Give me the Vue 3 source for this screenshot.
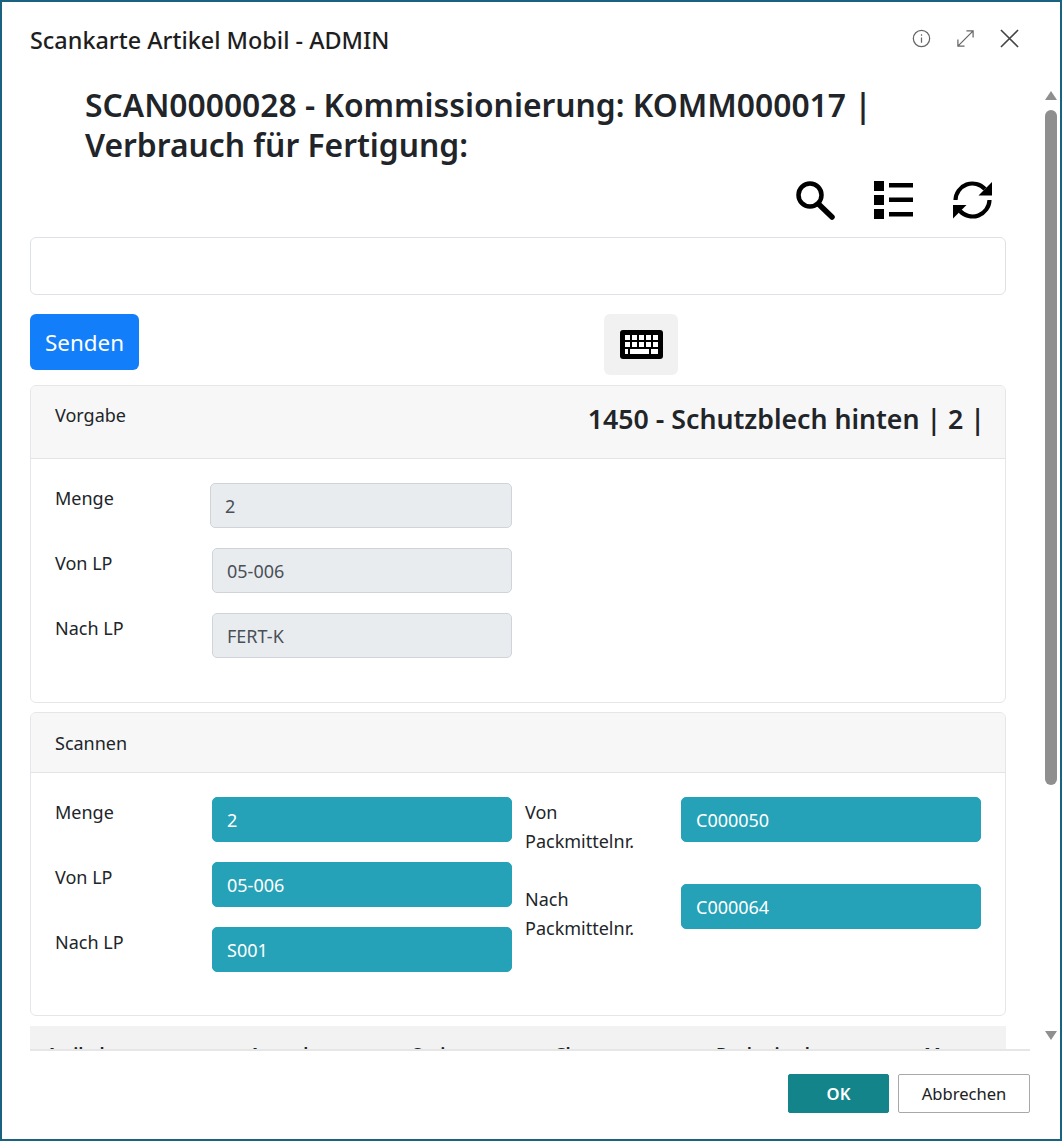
<script setup>
const vorgabe = [
  { label: 'Menge', value: '2' },
  { label: 'Von LP', value: '05-006' },
  { label: 'Nach LP', value: 'FERT-K' }
]
const scanLeft = [
  { label: 'Menge', value: '2' },
  { label: 'Von LP', value: '05-006' },
  { label: 'Nach LP', value: 'S001' }
]
const scanRight = [
  { label: 'Von Packmittelnr.', value: 'C000050' },
  { label: 'Nach Packmittelnr.', value: 'C000064' }
]
const columns = ['Artikel', 'Ausgabe', 'Serie', 'Charge', 'Packmittel', 'Menge']
</script>

<template>
  <div class="dialog">
    <header class="top">
      <div class="title">Scankarte Artikel Mobil - ADMIN</div>
      <div class="top-icons">
        <svg class="ti" viewBox="0 0 20 20"><circle cx="10" cy="10" r="8.6" /><path d="M10 9v5.4M10 5.6v1.6" /></svg>
        <svg class="ti" viewBox="0 0 20 20"><path d="M2 18L18 2M11 2h7v7M2 11v7h7" /></svg>
        <svg class="ti close" viewBox="0 0 20 20"><path d="M1 1l18 18M19 1L1 19" /></svg>
      </div>
    </header>

    <div class="middle">
      <main class="scroll">
        <h1 class="heading">SCAN0000028 - Kommissionierung: KOMM000017 | Verbrauch für Fertigung:</h1>

        <div class="tools">
          <svg class="tool" viewBox="0 0 40 40">
            <circle cx="14" cy="15" r="11.5" fill="none" stroke="#000" stroke-width="4.5" />
            <path d="M22.5 24l13.5 13" stroke="#000" stroke-width="5.5" stroke-linecap="round" />
          </svg>
          <svg class="tool" viewBox="0 0 40 40">
            <rect x="0" y="1" width="10" height="10" />
            <rect x="0" y="15" width="10" height="10" />
            <rect x="0" y="29" width="10" height="10" />
            <rect x="15" y="3" width="24" height="4.5" />
            <rect x="15" y="17.5" width="24" height="4.5" />
            <rect x="15" y="32" width="24" height="4.5" />
          </svg>
          <svg class="tool" viewBox="0 0 40 40">
            <path d="M3.5 20A17 17 0 0 1 33 9" fill="none" stroke="#000" stroke-width="4.2" />
            <path d="M37.5 20A17 17 0 0 1 8 31" fill="none" stroke="#000" stroke-width="4.2" />
            <path d="M40 2v13.5H26.5z" />
            <path d="M1 38.5V25h13.5z" />
          </svg>
        </div>

        <input class="scan" type="text" />

        <div class="actions">
          <button class="send" type="button">Senden</button>
          <button class="kbd" type="button">
            <svg viewBox="0 0 43 29" width="43" height="29">
              <rect x="0" y="0" width="43" height="29" rx="3" fill="#000" />
              <g fill="#fff">
                <rect x="5" y="5" width="5" height="5" /><rect x="12" y="5" width="5" height="5" /><rect x="19" y="5" width="5" height="5" /><rect x="26" y="5" width="5" height="5" /><rect x="33" y="5" width="5" height="5" />
                <rect x="5" y="12" width="5" height="5" /><rect x="12" y="12" width="5" height="5" /><rect x="19" y="12" width="5" height="5" /><rect x="26" y="12" width="5" height="5" /><rect x="33" y="12" width="5" height="5" />
                <rect x="5" y="19" width="3" height="5" /><rect x="10" y="19" width="19" height="5" /><rect x="31" y="19" width="7" height="5" />
              </g>
            </svg>
          </button>
        </div>

        <section class="card">
          <div class="card-head head-a">
            <span class="card-label">Vorgabe</span>
            <span class="card-item">1450 - Schutzblech hinten | 2 |</span>
          </div>
          <div class="card-body body-a">
            <div class="col">
              <div v-for="row in vorgabe" :key="row.label" class="row">
                <label class="lbl">{{ row.label }}</label>
                <input class="field off" type="text" readonly :value="row.value" />
              </div>
            </div>
          </div>
        </section>

        <section class="card second">
          <div class="card-head head-b">
            <span class="card-label">Scannen</span>
          </div>
          <div class="card-body body-b">
            <div class="col">
              <div v-for="row in scanLeft" :key="row.label" class="row">
                <label class="lbl">{{ row.label }}</label>
                <input class="field on" type="text" readonly :value="row.value" />
              </div>
            </div>
            <div class="col right">
              <div v-for="row in scanRight" :key="row.label" class="row">
                <label class="lbl wrap">{{ row.label }}</label>
                <input class="field on" type="text" readonly :value="row.value" />
              </div>
            </div>
          </div>
        </section>

        <div class="table-head">
          <span v-for="c in columns" :key="c">{{ c }}</span>
        </div>
      </main>

      <aside class="bar">
        <span class="arrow up"></span>
        <span class="thumb"></span>
        <span class="arrow down"></span>
      </aside>
    </div>

    <footer class="foot">
      <button class="ok" type="button">OK</button>
      <button class="cancel" type="button">Abbrechen</button>
    </footer>
  </div>
</template>

<style>
html, body { margin: 0; background: #fff; }
</style>

<style scoped>
* { box-sizing: border-box; }
.dialog {
  width: 1062px;
  height: 1141px;
  border: 2px solid #1b6180;
  background: #fff;
  display: flex;
  flex-direction: column;
  font-family: "Noto Sans", "Open Sans", sans-serif;
  color: #212529;
  overflow: hidden;
}
.top {
  height: 83px;
  flex: none;
  display: flex;
  justify-content: space-between;
  padding: 0 41px 0 28px;
}
.title {
  font-size: 23.4px;
  font-weight: 500;
  line-height: 30px;
  padding-top: 23px;
  color: #1e1e1e;
}
.top-icons {
  display: flex;
  gap: 25px;
  padding-top: 27px;
}
.ti {
  width: 19px;
  height: 19px;
  fill: none;
  stroke: #666;
  stroke-width: 1.3;
}
.close { stroke: #444; stroke-width: 1.7; }
.middle {
  flex: none;
  height: 966px;
  display: flex;
}
.scroll {
  width: 1000px;
  margin-left: 28px;
  height: 966px;
  overflow: hidden;
  border-bottom: 2px solid #e6e6e6;
}
.scroll > * { width: 976px; }
.heading {
  margin: 0;
  padding-left: 55px;
  padding-right: 100px;
  font-size: 31.8px;
  line-height: 40px;
  font-weight: 600;
  color: #212529;
}
.tools {
  display: flex;
  justify-content: flex-end;
  gap: 38px;
  padding-right: 14px;
  margin-top: 15px;
  margin-bottom: 17px;
}
.tool { width: 40px; height: 40px; display: block; }
.scan {
  display: block;
  height: 58px;
  border: 1px solid #dee2e6;
  border-radius: 6px;
  background: #fff;
  margin-bottom: 19px;
}
.actions {
  display: grid;
  grid-template-columns: 574px 74px;
  align-items: start;
  height: 61px;
  margin-bottom: 10px;
}
.send {
  width: 109px;
  height: 56px;
  border: 0;
  border-radius: 6px;
  background: #127efa;
  color: #fff;
  font-family: inherit;
  font-size: 22.4px;
}
.kbd {
  width: 74px;
  height: 61px;
  border: 0;
  border-radius: 6px;
  background: #f1f1f1;
  padding: 0;
  display: flex;
  align-items: center;
  justify-content: center;
}
.card {
  border: 1px solid #e4e6e8;
  border-radius: 6px;
  overflow: hidden;
  background: #fff;
}
.second { margin-top: 9px; }
.card-head {
  background: #f7f7f7;
  border-bottom: 1px solid #e2e4e6;
  display: flex;
  justify-content: space-between;
  padding-left: 24px;
  padding-right: 24px;
}
.head-a { height: 73px; padding-top: 15px; padding-right: 20px; }
.head-b { height: 60px; padding-top: 16px; }
.card-label { font-size: 18px; line-height: 28px; color: #212529; }
.card-item {
  font-size: 26.7px;
  font-weight: 600;
  line-height: 36px;
  color: #212529;
}
.card-body { display: flex; padding-left: 24px; }
.body-a { height: 243px; padding-top: 24px; }
.body-b { height: 242px; padding-top: 24px; gap: 13px; }
.col {
  width: 457px;
  display: flex;
  flex-direction: column;
  gap: 20px;
}
.right { width: 456px; gap: 28px; }
.row { display: flex; align-items: flex-start; }
.lbl {
  width: 157px;
  flex: none;
  font-size: 18px;
  line-height: 29px;
  padding-top: 1px;
  color: #212529;
}
.wrap { width: 156px; padding-right: 30px; }
.field {
  width: 300px;
  height: 45px;
  flex: none;
  border-radius: 5px;
  padding: 0 14px;
  font-family: inherit;
  font-size: 18px;
  outline: none;
}
.off {
  background: #e9ecef;
  border: 1px solid #ced4da;
  color: #495057;
}
.body-a .row:first-child .lbl { width: 155px; }
.body-a .row:first-child .field { width: 302px; }
.on {
  background: #25a2b7;
  border: 1px solid #25a2b7;
  color: #fff;
}
.table-head {
  margin-top: 10px;
  height: 60px;
  background: #f2f2f2;
  display: grid;
  grid-template-columns: 203px 163px 142px 162px 208px 1fr;
  padding-left: 16px;
  padding-top: 16px;
  font-size: 18px;
  font-weight: 600;
  line-height: 24px;
  color: #212529;
}
.bar {
  width: 13px;
  margin-left: 14px;
  display: flex;
  flex-direction: column;
  align-items: center;
  padding-top: 6px;
}
.arrow {
  width: 0;
  height: 0;
  border-left: 6px solid transparent;
  border-right: 6px solid transparent;
}
.up { border-bottom: 9px solid #8f8f8f; }
.down { border-top: 9px solid #8f8f8f; margin-top: 246px; }
.thumb {
  width: 12px;
  height: 675px;
  margin-top: 10px;
  border-radius: 6px;
  background: #8f8f8f;
}
.foot {
  flex: 1;
  display: flex;
  justify-content: flex-end;
  gap: 9px;
  padding: 23px 30px 0 0;
}
.ok, .cancel {
  height: 39px;
  border-radius: 2px;
  font-family: inherit;
  font-size: 16.6px;
}
.ok {
  width: 101px;
  border: 1px solid #13858a;
  background: #13858a;
  color: #fff;
  font-weight: 600;
}
.cancel {
  width: 132px;
  border: 1px solid #a8a8a8;
  background: #fff;
  color: #212121;
}
</style>
